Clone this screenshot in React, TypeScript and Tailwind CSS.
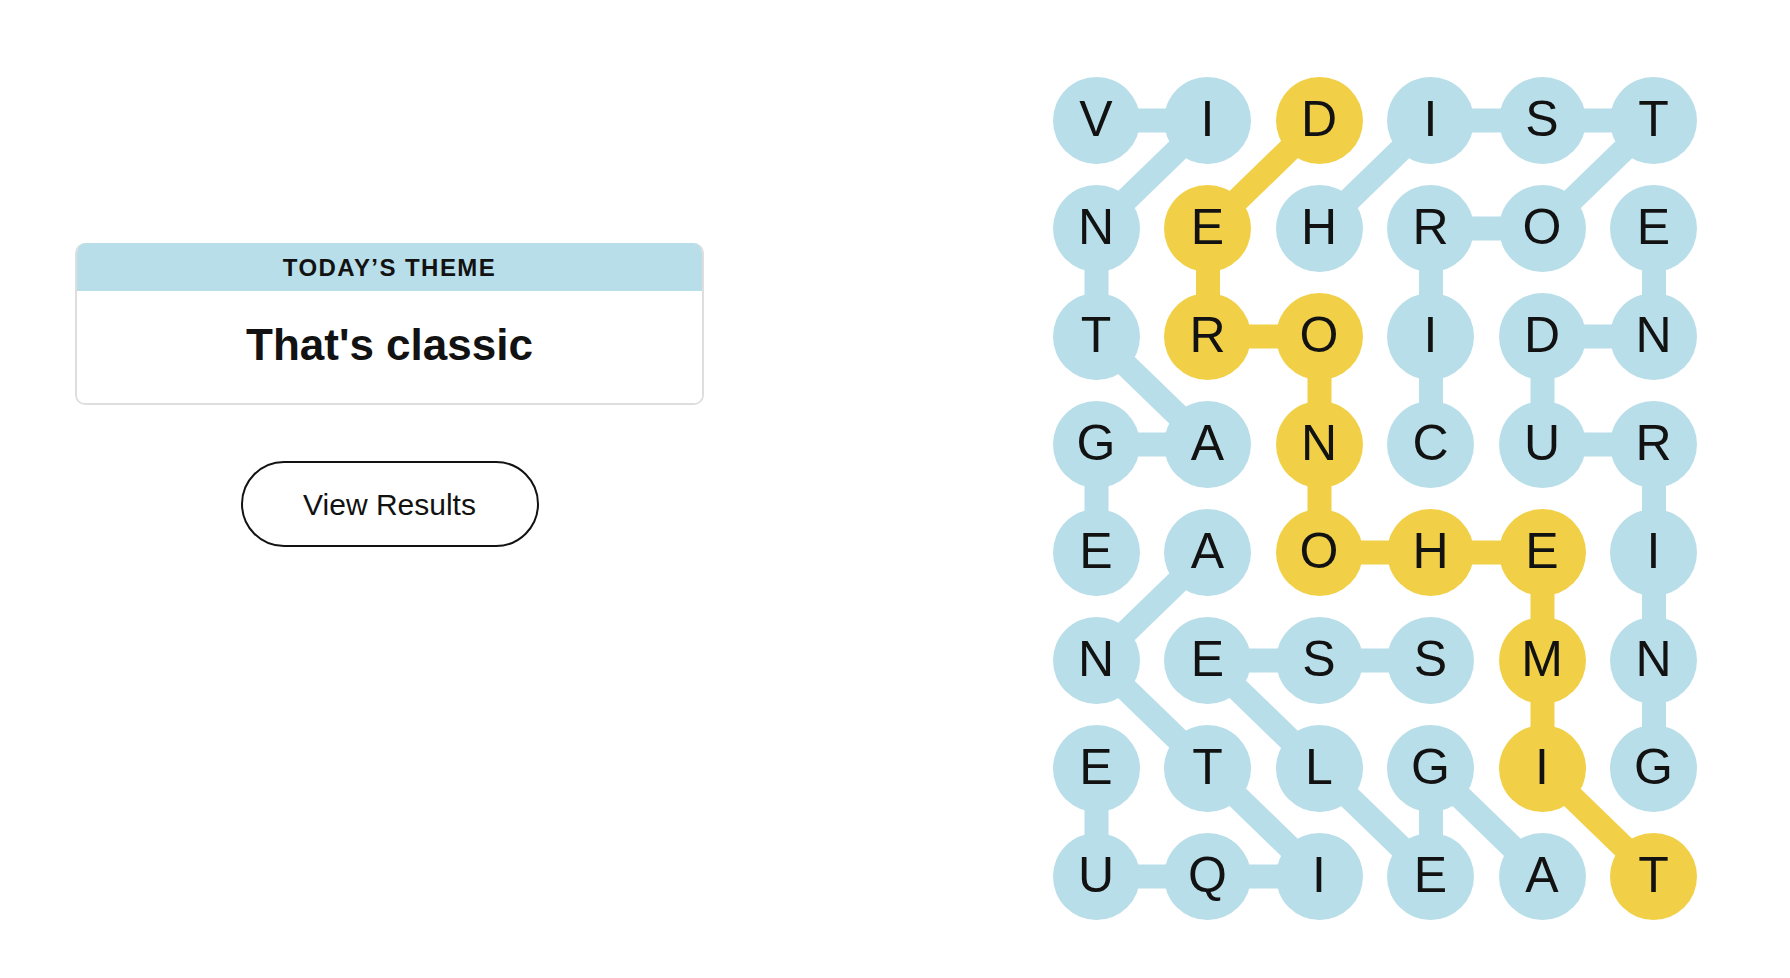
import React from 'react';

const rows = [
  'VIDIST',
  'NEHROE',
  'TROIDN',
  'GANCUR',
  'EAOHEI',
  'NESSMN',
  'ETLGIG',
  'UQIEAT',
];

// spangram cells, row-col
const spangram = ['7-5', '6-4', '5-4', '4-4', '4-3', '4-2', '3-2', '2-2', '2-1', '1-1', '0-2'];

const words: { color: string; path: [number, number][] }[] = [
  { color: '#b8dee9', path: [[0, 0], [0, 1], [1, 0], [2, 0], [3, 1], [3, 0], [4, 0]] },
  { color: '#b8dee9', path: [[1, 2], [0, 3], [0, 4], [0, 5], [1, 4], [1, 3], [2, 3], [3, 3]] },
  { color: '#b8dee9', path: [[1, 5], [2, 5], [2, 4], [3, 4], [3, 5], [4, 5], [5, 5], [6, 5]] },
  { color: '#b8dee9', path: [[4, 1], [5, 0], [6, 1], [7, 2], [7, 1], [7, 0], [6, 0]] },
  { color: '#b8dee9', path: [[7, 4], [6, 3], [7, 3], [6, 2], [5, 1], [5, 2], [5, 3]] },
  { color: '#f1d048', path: [[7, 5], [6, 4], [5, 4], [4, 4], [4, 3], [4, 2], [3, 2], [2, 2], [2, 1], [1, 1], [0, 2]] },
];

const cx = (c: number) => 43.5 + c * 111.5;
const cy = (r: number) => 43.5 + r * 108;

function Board() {
  return (
    <div className="relative mt-[77px] w-[644.5px] h-[843px]">
      <svg className="absolute inset-0" width="644.5" height="843" viewBox="0 0 644.5 843">
        {words.map((w, i) =>
          w.path.slice(1).map(([r, c], j) => {
            const [pr, pc] = w.path[j];
            return (
              <line
                key={`${i}-${j}`}
                x1={cx(pc)}
                y1={cy(pr)}
                x2={cx(c)}
                y2={cy(r)}
                stroke={w.color}
                strokeWidth={24}
              />
            );
          })
        )}
      </svg>
      <div className="relative grid grid-cols-[repeat(6,87px)] gap-x-[24.5px] gap-y-[21px]">
        {rows.map((row, r) =>
          row.split('').map((ch, c) => {
            const hit = spangram.includes(`${r}-${c}`);
            return (
              <div
                key={`${r}-${c}`}
                className={`flex h-[87px] w-[87px] items-center justify-center rounded-full pb-[3px] text-[50px] leading-none text-[#121212] ${
                  hit ? 'bg-[#f1d048]' : 'bg-[#b8dee9]'
                }`}
              >
                {ch}
              </div>
            );
          })
        )}
      </div>
    </div>
  );
}

export default function App() {
  return (
    <div className="flex min-h-[978px] w-[1790px] items-start bg-white pl-[75px] pr-[93px] font-['Liberation_Sans',Arial,sans-serif]">
      <div className="mt-[243px] flex w-[629px] flex-col items-center">
        <div className="w-full overflow-hidden rounded-[10px] border-2 border-t-0 border-[#dedede]">
          <div className="flex h-[48px] items-center justify-center bg-[#b8dee9] pt-[2px] text-[24px] font-bold uppercase tracking-[0.06em] text-[#121212]">
            Today’s Theme
          </div>
          <div className="flex h-[112px] items-center justify-center bg-white pb-[4px] text-[44px] font-bold text-[#121212]">
            That's classic
          </div>
        </div>
        <button className="mt-[56px] flex h-[86px] w-[298px] items-center justify-center rounded-full border-2 border-[#121212] bg-white text-[30px] text-[#121212]">
          View Results
        </button>
      </div>
      <div className="ml-auto">
        <Board />
      </div>
    </div>
  );
}
